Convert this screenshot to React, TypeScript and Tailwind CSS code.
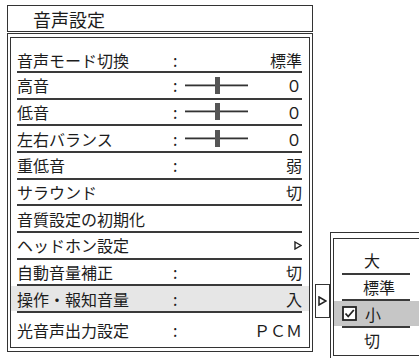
import React from "react";

const Tri = ({ w = 8, h = 8, sw = 1.5 }: { w?: number; h?: number; sw?: number }) => (
  <svg width={w} height={h} viewBox={`0 0 ${w} ${h}`}>
    <polygon points={`1,1 ${w - 1},${h / 2} 1,${h - 1}`} fill="white" stroke="#222" strokeWidth={sw} strokeLinejoin="miter" />
  </svg>
);

const Slider = () => (
  <svg width="63" height="17" viewBox="0 0 63 17" className="ml-[4px]">
    <rect x="0" y="7.5" width="63" height="1.8" fill="#333" />
    <rect x="30" y="0" width="5" height="17" fill="#555" />
  </svg>
);

type Row = {
  label: string;
  colon?: boolean;
  slider?: boolean;
  value?: string;
  tri?: boolean;
  hl?: boolean;
};

const rows: Row[] = [
  { label: "音声モード切換", colon: true, value: "標準" },
  { label: "高音", colon: true, slider: true, value: "０" },
  { label: "低音", colon: true, slider: true, value: "０" },
  { label: "左右バランス", colon: true, slider: true, value: "０" },
  { label: "重低音", colon: true, value: "弱" },
  { label: "サラウンド", value: "切" },
  { label: "音質設定の初期化" },
  { label: "ヘッドホン設定", tri: true },
  { label: "自動音量補正", colon: true, value: "切" },
  { label: "操作・報知音量", colon: true, value: "入", hl: true },
  { label: "光音声出力設定", colon: true, value: "ＰＣＭ" },
];

const Line = () => <div className="h-[2px] bg-[#3a3a3a] ml-[6px] mr-[7px] shrink-0" />;

function RowView({ r, cls }: { r: Row; cls: string }) {
  return (
    <div className={`flex items-center pl-[6px] pr-[7px] text-[16px] leading-[16px] ${r.hl ? "bg-[#e6e6e6]" : ""} ${cls}`}>
      <div className="w-[156px] shrink-0 whitespace-nowrap">{r.label}</div>
      {r.colon && <span className="w-[8px] shrink-0">:</span>}
      {r.slider && <Slider />}
      <div className="ml-auto flex items-center">
        {r.value && <span>{r.value}</span>}
        {r.tri && <Tri w={8} h={9} sw={1.4} />}
      </div>
    </div>
  );
}

export default function App() {
  return (
    <div className="w-[419px] h-[358px] overflow-hidden bg-white flex items-start font-['Noto_Sans_CJK_JP',sans-serif] text-[#1c1c1c]">
      {/* main panel */}
      <div className="ml-[7px] mt-[5px] w-[306px] shrink-0 flex flex-col">
        <div className="h-[27px] border border-[#333] pl-[25px] flex items-center text-[18px] leading-[18px]">音声設定</div>
        <div className="mt-[1px] border border-[#333] pl-[2px] pr-[2px] pt-[3px] pb-[3px]">
          <div className="border border-[#333] h-[311px] flex flex-col pt-[10px]">
            {rows.map((r, i) => {
              const last = i === rows.length - 1;
              const first = i === 0;
              return (
                <React.Fragment key={i}>
                  <RowView r={r} cls={last ? "flex-1" : first ? "h-[23px] shrink-0" : "h-[24.67px] shrink-0"} />
                  {!last && <Line />}
                </React.Fragment>
              );
            })}
          </div>
        </div>
      </div>

      {/* arrow box */}
      <div className="ml-[2px] mt-[284px] w-[15px] h-[34px] shrink-0 border border-[#333] flex items-center justify-center">
        <Tri w={9} h={10} sw={1.5} />
      </div>

      {/* popup */}
      <div className="mt-[232px] w-[95px] h-[127px] shrink-0 border border-[#333] pl-[2px] pt-[5px]">
        <div className="border border-[#333] h-[118px] flex flex-col text-[16px] leading-[16px]">
          <div className="h-[34px] shrink-0 flex items-end pb-[5px] pl-[30px]">大</div>
          <div className="h-[2px] bg-[#3a3a3a] ml-[8px] w-[68px] shrink-0" />
          <div className="h-[24px] shrink-0 flex items-center pl-[29px]">標準</div>
          <div className="h-[2px] bg-[#3a3a3a] ml-[8px] w-[68px] shrink-0" />
          <div className="h-[25px] shrink-0 flex items-center pl-[8px] bg-[#c6c6c6]">
            <svg width="15" height="15" viewBox="0 0 15 15">
              <rect x="1" y="1" width="13" height="13" fill="white" stroke="#222" strokeWidth="1.8" />
              <path d="M3.5 7.5 L6.2 10.5 L11.8 4" fill="none" stroke="#222" strokeWidth="1.8" />
            </svg>
            <span className="ml-[8px]">小</span>
          </div>
          <div className="h-[2px] bg-[#3a3a3a] ml-[8px] w-[68px] shrink-0" />
          <div className="flex-1 flex items-start pt-[4px] pl-[30px]">切</div>
        </div>
      </div>
    </div>
  );
}
